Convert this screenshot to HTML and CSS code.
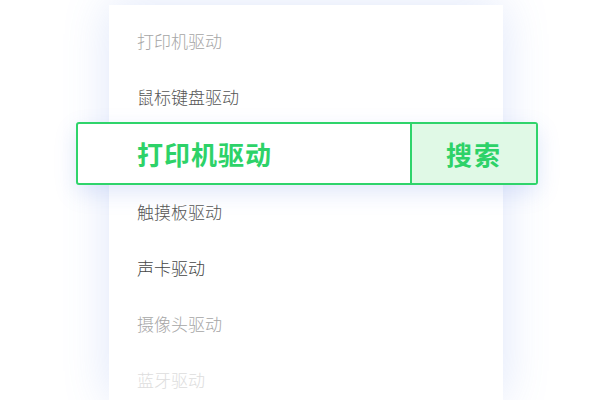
FILE: index.html
```html
<!DOCTYPE html>
<html lang="zh-CN">
  <head>
    <meta charset="UTF-8" />
    <meta name="viewport" content="width=device-width, initial-scale=1.0" />
    <title>驱动搜索</title>
    <link rel="stylesheet" href="styles.css">
  </head>
  <body>
    <div class="driver-list">
      <div class="driver-item faded">打印机驱动</div>
      <div class="driver-item">鼠标键盘驱动</div>

      <div class="search-bar">
        <div class="search-input">打印机驱动</div>
        <button class="search-btn">搜索</button>
      </div>

      <div class="driver-item">触摸板驱动</div>
      <div class="driver-item dark">声卡驱动</div>
      <div class="driver-item faded">摄像头驱动</div>
      <div class="driver-item ghost">蓝牙驱动</div>
    </div>
  </body>
</html>
```

FILE: styles.css
```css
body {
  margin: 0;
  background-color: #fff;
  font-family: "Noto Sans CJK SC", "Noto Sans", sans-serif;
  overflow: hidden;
}

.driver-list {
  width: 394px;
  height: 395px;
  margin: 5px 0 0 109px;
  padding-top: 9px;
  box-sizing: border-box;
  display: flex;
  flex-direction: column;
  background-color: #fff;
  box-shadow: 0 0 44px rgba(90, 130, 230, 0.2);
}

.driver-item {
  height: 56px;
  flex-shrink: 0;
  box-sizing: border-box;
  padding: 0 0 4px 28px;
  display: flex;
  align-items: center;
  font-size: 17px;
  font-weight: 300;
  color: #555;
}

.driver-item.faded {
  color: #a6a6a6;
}

.driver-item.dark {
  color: #444;
}

.driver-item.ghost {
  color: #ddd;
}

.search-bar {
  display: flex;
  height: 63px;
  flex-shrink: 0;
  margin: -4px -35px 0 -33px;
  box-sizing: border-box;
  border: 2px solid #2fd46b;
  border-radius: 3px;
  background-color: #fff;
  box-shadow: 0 8px 22px rgba(90, 130, 230, 0.18);
  overflow: hidden;
}

.search-input {
  flex: 1;
  display: flex;
  align-items: center;
  padding-left: 59px;
  font-size: 26px;
  font-weight: bold;
  letter-spacing: 1px;
  color: #2dd268;
}

.search-btn {
  width: 126px;
  border: none;
  border-left: 2px solid #2fd46b;
  background-color: #e0f9e6;
  font-family: inherit;
  font-size: 26px;
  font-weight: bold;
  letter-spacing: 2px;
  color: #2dd268;
  padding: 0;
}
```
